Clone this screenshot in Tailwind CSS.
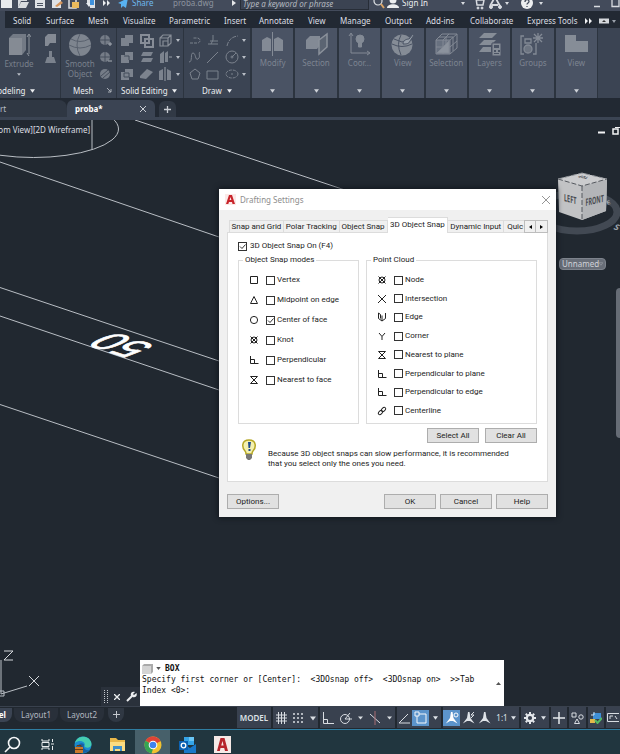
<!DOCTYPE html>
<html lang="en">
<head>
<meta charset="utf-8">
<meta name="viewport" content="width=device-width, initial-scale=1">
<title>proba.dwg</title>
<script src="https://cdn.jsdelivr.net/npm/@tailwindcss/browser@4"></script>
</head>
<body class="flex h-screen flex-col overflow-hidden bg-[#212830] font-['Noto_Sans',sans-serif] text-[8px] leading-[10px] text-[#d5d9df]">

<svg class="hidden">
  <defs>
    <symbol id="down" viewBox="0 0 6 4"><path d="M0 0h6L3 4z" fill="currentColor"/></symbol>
    <symbol id="knot" viewBox="0 0 10 10"><circle cx="5" cy="5" r="3"/><path d="M1.500 1.500l7 7M8.500 1.500l-7 7"/></symbol>
    <symbol id="perp" viewBox="0 0 10 10"><path d="M1.500 1v7.500H9.500M1.500 4.500h4v4"/></symbol>
    <symbol id="near" viewBox="0 0 10 10"><path d="M1.500 1.500h7l-7 7h7z"/></symbol>
    <symbol id="annot" viewBox="0 0 14 14"><path d="M6 1l1.500 0L8.500 7l4 5.500-4.500-2.500h-3L.8 12.500 5 7z" fill="currentColor"/></symbol>
  </defs>
</svg>

<header class="flex h-[11px] shrink-0 flex-col justify-end overflow-hidden bg-[#434b5b]">
  <div class="flex h-[16px] items-center">
    <div class="flex w-[118px] shrink-0 items-center">
      <svg class="h-[18px] w-[118px]" viewBox="0 0 118 18">
        <path d="M1 2h11v12H1z" fill="#e8eaec"/><path d="M18 4h9v3h-6l-3 7zM21 8h8l-3 6h-8z" fill="#d9dce0"/>
        <path d="M35 3h10v11H35z" fill="#dfe2e6"/><path d="M37 9h6v1h-6zM37 11h6v1h-6z" fill="#4b5362"/>
        <path d="M52 3h9v11h-9z" fill="#dfe2e6"/><path d="M55 12l6-5 2 2-6 4z" fill="#d5945a"/>
        <path d="M69 3h7v11h-7z" fill="none" stroke="#dfe2e6" stroke-width="1.500"/><path d="M72 8h7v6h-7z" fill="#e9b95c"/>
        <path d="M87 2h8v12h-5v-4h-3z" fill="#dfe2e6"/><path d="M86 9l3 4 3-4z" fill="#e9edf2"/><path d="M90 4h4v7h-4z" fill="#3f91dd"/>
        <path d="M103 6l3 3-3 3zM107 6l3 3-3 3z" fill="#eceef0"/>
      </svg>
    </div>
    <button class="flex w-[55px] shrink-0 items-center gap-1 text-[#6fb8ee]"><svg class="h-[12px] w-[10px]" viewBox="0 0 10 12"><path d="M0 6l10-5-2 10-3-2-2 2V7z" fill="#58b2f2"/></svg>Share</button>
    <span class="w-[59px] shrink-0 text-[#8c939f]">proba.dwg</span>
    <svg class="mr-1 h-2 w-1 shrink-0" viewBox="0 0 4 8"><path d="M0 1l4 3-4 3z" fill="#e6e8ea"/></svg>
    <input aria-label="Search" placeholder="Type a keyword or phrase" class="h-[14px] w-[129px] shrink-0 border border-[#272d37] bg-[#3b4352] px-[2px] italic placeholder:text-[#b2b7bf]">
    <svg class="ml-1 h-4 w-[12px] shrink-0" viewBox="0 0 12 16"><circle cx="5" cy="6" r="4" fill="none" stroke="#dfe2e5" stroke-width="1.200"/><path d="M8 9l3 4" stroke="#d9a364" stroke-width="2"/></svg>
    <button class="ml-[2px] flex w-[73px] shrink-0 items-center gap-[3px] text-[#eceef0]"><svg class="h-4 w-[12px]" viewBox="0 0 12 16"><circle cx="6" cy="5" r="3.500" fill="#eceef0"/><path d="M0 13c0-5 12-5 12 0z" fill="#eceef0"/></svg>Sign In</button>
    <svg class="h-[18px] w-[84px] shrink-0" viewBox="0 0 84 18" fill="none" stroke="#d8dbe0">
      <path d="M1 8h4l-2 3zM45 8h4l-2 3zM79 8h4l-2 3z" fill="#d8dbe0" stroke="none"/>
      <path d="M14 4h2l1 7h6l1-5h-8" stroke-width="1.500"/><circle cx="18" cy="14" r="1" fill="#d8dbe0"/><circle cx="22" cy="14" r="1" fill="#d8dbe0"/>
      <path d="M30 12l5-9 5 9M32 11h6" stroke-width="1.800"/><circle cx="31" cy="13" r="1.500" fill="#d8dbe0"/><circle cx="40" cy="13" r="1.500" fill="#d8dbe0"/>
      <circle cx="67" cy="9" r="6" fill="#eceef0" stroke="none"/><path d="M65 8c0-3 4-3 4-.5 0 1.500-2 1.500-2 3M67 12v1" stroke="#434b5b" stroke-width="1.300"/>
    </svg>
    <svg class="ml-auto h-[18px] w-[28px] shrink-0" viewBox="0 0 28 18" fill="none" stroke="#d8dbe0"><path d="M2 12.500h6M20 4v8.500h7V4" stroke-width="1.300"/></svg>
  </div>
</header>

<nav class="flex h-[17px] shrink-0 items-center bg-[#222933] pt-[2px] text-[#dcdfe3]">
  <span class="-mt-[2px] h-[17px] w-[5px] shrink-0 bg-[#3b4453]"></span>
  <a href="#" class="ml-2 w-[33px]">Solid</a><a href="#" class="w-[42px]">Surface</a><a href="#" class="w-[35px]">Mesh</a><a href="#" class="w-[46px]">Visualize</a><a href="#" class="w-[55px]">Parametric</a><a href="#" class="w-[35px]">Insert</a><a href="#" class="w-[49px]">Annotate</a><a href="#" class="w-[32px]">View</a><a href="#" class="w-[45px]">Manage</a><a href="#" class="w-[41px]">Output</a><a href="#" class="w-[44px]">Add-ins</a><a href="#" class="w-[57px]">Collaborate</a><a href="#" class="w-[58px] whitespace-nowrap">Express Tools</a>
  <svg class="h-2 w-[32px] shrink-0" viewBox="0 0 32 8"><path d="M0 1l3 3-3 3zM4 1l3 3-3 3z" fill="#f0f1f3"/><path d="M14 1.500h10v5H14z" fill="#d5d8dc"/><path d="M17 5h4l-2-2z" fill="#333"/><path d="M27 3h4l-2 3z" fill="#9aa1ab"/></svg>
</nav>

<section class="flex h-[70px] shrink-0 bg-[#3b4453] text-[#79808c]" aria-label="Ribbon">
  <div class="flex w-[61px] shrink-0 flex-col border-r border-[#2c343f]">
    <div class="flex flex-1">
      <button class="flex w-[38px] flex-col items-center pt-[5px]">
        <svg class="h-[24px] w-[24px]" viewBox="0 0 24 24"><path d="M2 5l4-4h13v16l-4 5H2z" fill="#737a85"/><path d="M2 5h13v17H2z" fill="#858b94"/><path d="M22 2v19M20 4l2-3 2 3M20 20l2 3" stroke="#8d939c" fill="none"/></svg>
        <span class="mt-[2px]">Extrude</span>
        <svg class="mt-1 h-[3px] w-1 text-[#b8bdc5]"><use href="#down"/></svg>
      </button>
      <svg class="ml-[6px] mt-[5px] h-[34px] w-[13px]" viewBox="0 0 13 34"><path d="M1 4l3-3h8v9H6l-2 3H1z" fill="#848a94"/><path d="M3 24h7l2 6H1zM5 18h3v6H5z" fill="#7b828d"/></svg>
    </div>
    <h2 class="flex h-[15px] items-center gap-1 whitespace-nowrap pl-[26px] text-[#eceef1]"><span class="-ml-[36px]">Modeling</span><svg class="h-[4px] w-[5px]"><use href="#down"/></svg></h2>
  </div>
  <div class="flex w-[56px] shrink-0 flex-col border-r border-[#2c343f]">
    <div class="flex flex-1">
      <button class="flex w-[38px] flex-col items-center pt-[5px]">
        <svg class="h-[24px] w-[24px]" viewBox="0 0 24 24"><circle cx="12" cy="12" r="11" fill="#7e858f"/><path d="M1 12q11 6 22 0M12 1q-6 11 0 22M3 6q9 5 18 0" stroke="#59616e" fill="none"/></svg>
        <span class="mt-[2px]">Smooth Object</span>
      </button>
      <svg class="mt-[5px] h-[47px] w-[13px]" viewBox="0 0 13 47"><g fill="#757c87"><circle cx="6" cy="7" r="5"/><circle cx="6" cy="24" r="5"/><circle cx="6" cy="41" r="5"/></g><path d="M1 7h10M6 2v10M1 24h10M6 19v10M2 43l7-6M4 45l7-6" stroke="#464e5c"/><path d="M9 11h4M11 9v4M9 28h4" stroke="#a9aeb6"/></svg>
    </div>
    <h2 class="flex h-[15px] items-center pl-[12px] text-[#eceef1]"><span class="flex-1">Mesh</span><svg class="mr-[4px] h-[5px] w-[5px]" viewBox="0 0 5 5"><path d="M0 0l4 4M4 1v3H1" stroke="#a9aeb6" fill="none"/></svg></h2>
  </div>
  <div class="flex w-[67px] shrink-0 flex-col border-r border-[#2c343f]">
    <svg class="mt-[5px] ml-[3px] h-[50px] w-[60px]" viewBox="0 0 60 50" fill="#7c838e">
      <path d="M1 5h4V2h8v8H9v3H1zM1 22h4v-3h8v8H9v3H1zM1 39h4v-3h8v8H9v3H1z"/><path d="M4 23h5v4M4 40h5v4H4z" stroke="#434c5a" fill="none"/>
      <path d="M21 2h8v8h-8zM25 6h8v8h-8z" fill="none" stroke="#878d97" stroke-width="2"/>
      <path d="M23 19h10l-2 4H21zM23 25h10l-2 4H21zM20 43l7-7 6 3-7 7-6-1z"/>
      <path d="M40 5l3-3h8v8l-3 3h-8zM40 5h8v8M48 5l3-3M43 8h5v5h-5z" fill="none" stroke="#878d97" stroke-width="1.200"/>
      <path d="M40 21l4-3v12h-4zM45 20l3-2v11h-3zM39 38l4-2v11h-4zM47 36l4 2v9h-4z"/><path d="M45 34v14M49 24h3" stroke="#9a9fa8"/>
      <path d="M56 6h4l-2 3zM56 23h4l-2 3zM56 40h4l-2 3z" fill="#b8bdc5"/>
    </svg>
    <h2 class="flex h-[15px] items-center gap-1 whitespace-nowrap pl-1 text-[#eceef1]">Solid Editing<svg class="h-[4px] w-[5px]"><use href="#down"/></svg></h2>
  </div>
  <div class="flex w-[67px] shrink-0 flex-col border-r border-[#2c343f]">
    <svg class="mt-[5px] ml-[4px] h-[50px] w-[60px]" viewBox="0 0 60 50" fill="none" stroke="#7b828d">
      <path d="M2 10h7c4 0 4-5 0-5H5" stroke-dasharray="3 1"/><path d="M20 11h10M22 8h8M25 2v5l-2 4"/><path d="M39 13q2-9 11-10" stroke-dasharray="4 1"/>
      <path d="M1 29c4 0 1-9 4-9s2 8 5 6 0-6 2-7M19 30l11-11"/><circle cx="44" cy="24" r="6"/><circle cx="44" cy="24" r="1"/><path d="M44 24l4-4"/>
      <path d="M7 36l5 4-2 6H4l-2-6zM19 38h11v8H19z"/><ellipse cx="44" cy="41" rx="6" ry="4" stroke-dasharray="3 1"/><path d="M43 41h2"/>
      <path d="M54 6h4l-2 3zM54 23h4l-2 3zM54 40h4l-2 3z" fill="#b8bdc5" stroke="none"/>
    </svg>
    <h2 class="flex h-[15px] items-center gap-[5px] pl-[18px] text-[#eceef1]">Draw<svg class="h-[4px] w-[5px]"><use href="#down"/></svg></h2>
  </div>
  <div class="grid w-[347px] shrink-0 grid-cols-8 gap-[2px] border-l border-[#2c343f] bg-[#2c343f] pr-px text-[#7d8491]">
    <button class="flex flex-col items-center bg-[#4a5364] pt-[4px] pb-[5px]"><svg class="h-[25px] w-[25px]" viewBox="0 0 25 25" fill="#838a95"><path d="M2 8l5-3 4 2v12H2zM23 8l-5-3-4 2v12h9z"/><path d="M12 0h1v24h-1z"/></svg><span class="mt-px">Modify</span><svg class="mt-auto h-[4px] w-[5px] text-[#cfd3d9]"><use href="#down"/></svg></button>
    <button class="flex flex-col items-center bg-[#4a5364] pt-[4px] pb-[5px]"><svg class="h-[25px] w-[25px]" viewBox="0 0 25 25"><path d="M2 8l4-4h10v9l-3 4H2z" fill="#838a95"/><path d="M15 8l8-6v13l-8 7z" fill="#5b6472" stroke="#8b919b" stroke-width="1.500"/></svg><span class="mt-px">Section</span><svg class="mt-auto h-[4px] w-[5px] text-[#cfd3d9]"><use href="#down"/></svg></button>
    <button class="flex flex-col items-center bg-[#4a5364] pt-[4px] pb-[5px]"><svg class="h-[25px] w-[25px]" viewBox="0 0 25 25" fill="none" stroke="#838a95"><path d="M4 2v19h18M2 4l2-3 2 3M20 19l3 2-3 2"/><circle cx="13" cy="7" r="4" fill="#838a95"/><path d="M11.500 11h3v4h-3z" fill="#838a95"/></svg><span class="mt-px">Coor...</span><svg class="mt-auto h-[4px] w-[5px] text-[#cfd3d9]"><use href="#down"/></svg></button>
    <button class="flex flex-col items-center bg-[#4a5364] pt-[4px] pb-[5px]"><svg class="h-[25px] w-[25px]" viewBox="0 0 25 25"><circle cx="12" cy="13" r="10.500" fill="#858c96"/><path d="M2 12q10 5 20 0M11 3q-5 9 0 20M4 7l8 3 8-3" fill="none" stroke="#4a5364"/><path d="M13 12c0-4 4-5 6-5l4-5 1 1-4 6c-1 3-4 3-7 3z" fill="#98a0aa" stroke="#4a5364"/></svg><span class="mt-px">View</span><svg class="mt-auto h-[4px] w-[5px] text-[#cfd3d9]"><use href="#down"/></svg></button>
    <button class="flex flex-col items-center bg-[#4a5364] pt-[4px] pb-[5px]"><svg class="h-[25px] w-[25px]" viewBox="0 0 25 25" stroke="#838a95"><path d="M2 8h14v14H2z" fill="#687180"/><path d="M2 8l6-6h15v14l-7 6M16 8l7-6M9 8v14M2 15h14l7-6M12 5v8M9 8l6-6M5 5h14v14" fill="none"/><path d="M3 21l12-12v12z" fill="#8b929d"/></svg><span class="mt-px">Selection</span><svg class="mt-auto h-[4px] w-[5px] text-[#cfd3d9]"><use href="#down"/></svg></button>
    <button class="flex flex-col items-center bg-[#4a5364] pt-[4px] pb-[5px]"><svg class="h-[25px] w-[25px]" viewBox="0 0 25 25" fill="#868d97"><path d="M7 1h13l-5 5H2zM7 8h12l-5 5H2zM6 15h8v5H2z"/><path d="M15 11h9v13h-9z" stroke="#4a5364"/><path d="M17 13h5v3h-5zM17 18h2v2h-2zM21 18h2v2h-2zM17 21h5v1h-5z" fill="#4a5364"/></svg><span class="mt-px">Layers</span><svg class="mt-auto h-[4px] w-[5px] text-[#cfd3d9]"><use href="#down"/></svg></button>
    <button class="flex flex-col items-center bg-[#4a5364] pt-[4px] pb-[5px]"><svg class="h-[25px] w-[25px]" viewBox="0 0 25 25" fill="none" stroke="#838a95" stroke-width="1.300"><path d="M4 4H1v18h3M13 22h3V11M5 7h6v4H5z"/><circle cx="8" cy="17" r="4" fill="#6d7582"/><path d="M18 1v10M13 6h10M14 2l8 8M22 2l-8 8"/></svg><span class="mt-px">Groups</span><svg class="mt-auto h-[4px] w-[5px] text-[#cfd3d9]"><use href="#down"/></svg></button>
    <button class="flex flex-col items-center bg-[#4a5364] pt-[4px] pb-[5px]"><svg class="h-[25px] w-[25px]" viewBox="0 0 25 25"><path d="M1 3h11v6h12v11H1z" fill="#868d97"/></svg><span class="mt-px">View</span><svg class="mt-auto h-[4px] w-[5px] text-[#cfd3d9]"><use href="#down"/></svg></button>
  </div>
</section>

<div class="flex h-[22px] shrink-0 items-end border-b-3 border-[#3b4453] bg-[#222933]">
  <div class="flex h-[17px] w-[67px] shrink-0 items-center rounded-tr-lg bg-[#2f3743] text-[#b9bec6]">rt</div>
  <div class="flex h-[17px] w-[88px] shrink-0 items-center justify-between rounded-t-md bg-[#3b4453] pl-2 pr-[9px] font-bold text-white">proba*
    <button aria-label="Close tab"><svg class="h-[6px] w-[6px]" viewBox="0 0 6 6"><path d="M0 0l6 6M6 0L0 6" stroke="#c9cdd3"/></svg></button>
  </div>
  <button aria-label="New tab" class="ml-1 flex h-[16px] w-[17px] items-center justify-center rounded-t-md bg-[#313945]"><svg class="h-[7px] w-[7px]" viewBox="0 0 7 7"><path d="M3.500 0v7M0 3.500h7" stroke="#c9cdd3" stroke-width="1.300"/></svg></button>
</div>

<main class="relative min-h-0 flex-1 overflow-hidden bg-[#212830]">
  <svg class="absolute left-0 top-0 h-[586px] w-[620px]" viewBox="0 0 620 586" fill="none" stroke="#b9bec4">
    <path d="M135 0L345 70M0 42L219 117M0 167.500L219 241M0 196L219 270M0 284.500L219 358M92 0V29.500"/>
    <ellipse cx="33.500" cy="9" rx="85" ry="28.500"/>
    <text transform="matrix(-1.280 -.42 1.400 -.6 156.500 226)" font-family="Liberation Sans" font-size="30" fill="#fff" stroke="#fff" stroke-width=".7">50</text>
    <path d="M1 540v34L27 566M-4 571h8v5h-8z"/><path d="M29 556l10 10M39 556l-10 10M4 531h9l-9 9h9" stroke="#d5d8dc"/>
  </svg>
  <span class="absolute left-[-21px] top-[5px] whitespace-nowrap text-[#dcdfe2]">[Custom View][2D Wireframe]</span>
  <div class="absolute right-0 top-0 h-[160px] w-[80px]">
    <svg class="h-full w-full" viewBox="540 120 80 160" fill="none">
      <path d="M598 132.500h7" stroke="#f2f3f4" stroke-width="2"/><path d="M613 129h5v5h-5z" stroke="#f2f3f4" stroke-width="1.500"/><path d="M615 127.500h5" stroke="#f2f3f4"/>
      <ellipse cx="577" cy="212" rx="40" ry="19" stroke="#424953" stroke-width="7"/>
      <path d="M558 179l24-6 25 6-1 32-24 9-23-8z" fill="#c2c3c5"/><path d="M582 186l25-7-1 32-24 9z" fill="#b3b5b8"/><path d="M558 179l24-6 25 6-25 7z" fill="#cbccce"/>
      <path d="M558 179l24 7 25-7M582 186v34" stroke="#55595f" stroke-dasharray="5 2"/><path d="M558 179l24-6 25 6" stroke="#8b8f94" stroke-dasharray="5 2"/>
      <g font-family="Noto Sans, sans-serif" font-size="9" font-weight="700" fill="#4a4d52">
        <text transform="matrix(.62 .17 0 1.100 564 201)">LEFT</text><text transform="matrix(.6 -.14 0 1.100 585.500 206)">FRONT</text><text transform="matrix(-.5 -.1 .4 -.3 589 177)">TOP</text>
        <text transform="matrix(.9 .3 -.5 .8 613 229)" fill="#9ea3aa">S</text><text transform="matrix(.8 -.2 .2 .6 607 205)" fill="#9ea3aa">E</text>
      </g>
    </svg>
  </div>
  <button class="absolute right-[14px] top-[138px] flex h-[12px] w-[47px] items-center justify-between rounded border border-[#7d838c] bg-[#686e78] px-[2px] text-[#d0d3d8]">Unnamed<svg class="h-[4px] w-[5px]" viewBox="0 0 6 4"><path d="M0 0h6L3 4z" fill="none" stroke="#989da5"/></svg></button>
  <div class="absolute right-0 top-[168px] h-[150px] w-1 rounded-l bg-[#666c75]"></div>

  <section role="dialog" aria-labelledby="dlg" class="absolute left-[219px] top-[69px] w-[337px] bg-[#f0f0f0] pb-2 font-['Roboto','Liberation_Sans',sans-serif] text-[#1c1c1c] shadow-[0_0_5px_1px_#11161c]">
    <header class="flex h-[21px] items-center bg-white px-[6px] font-['Noto_Sans',sans-serif] text-[#8d8d8d]">
      <svg class="mr-[4px] h-[11px] w-[11px]" viewBox="0 0 11 11"><path d="M0 0h11v11H0z" fill="#fbe9e8"/><path d="M1 10L4 1h3l3 9H7.500L7 8H4l-.7 2zM4.600 6h1.800L5.500 3z" fill="#c8242b"/></svg>
      <h1 id="dlg" class="flex-1">Drafting Settings</h1>
      <button aria-label="Close"><svg class="h-2 w-2" viewBox="0 0 8 8"><path d="M0 0l8 8M8 0L0 8" stroke="#8a8a8a" stroke-width=".9"/></svg></button>
    </header>
    <div class="mt-[7px] px-2">
      <div role="tablist" class="relative z-10 -mb-px flex h-[16px] items-end pl-[2px] whitespace-nowrap">
        <button role="tab" class="h-[13px] w-[55px] border border-b-0 border-[#dcdcdc]">Snap and Grid</button>
        <button role="tab" class="h-[13px] w-[56px] border border-b-0 border-l-0 border-[#dcdcdc]">Polar Tracking</button>
        <button role="tab" class="h-[13px] w-[48px] border border-b-0 border-l-0 border-[#dcdcdc]">Object Snap</button>
        <button role="tab" aria-selected="true" class="flex h-[16px] w-[61px] justify-center border border-b-0 border-l-0 border-[#dcdcdc] bg-white pt-[2px]">3D Object Snap</button>
        <button role="tab" class="h-[13px] w-[56px] border border-b-0 border-l-0 border-[#dcdcdc]">Dynamic Input</button>
        <button role="tab" class="h-[13px] w-[20px] border-t border-[#dcdcdc] pl-[3px] text-left">Quic</button>
        <button aria-label="Previous tabs" class="flex h-[13px] w-[12px] items-center justify-center border border-[#bdbdbd]"><svg class="h-1 w-[3px]" viewBox="0 0 3 4"><path d="M3 0v4L0 2z"/></svg></button>
        <button aria-label="Next tabs" class="flex h-[13px] w-[12px] items-center justify-center border border-l-0 border-[#bdbdbd]"><svg class="h-1 w-[3px]" viewBox="0 0 3 4"><path d="M0 0v4l3-2z"/></svg></button>
      </div>
      <div class="border border-[#dcdcdc] bg-white px-[10px] pt-2 pb-3">
        <label class="flex h-[10px] items-center gap-[3px]"><input type="checkbox" checked class="absolute h-[9px] w-[9px] appearance-none border border-[#333]"><svg class="h-[9px] w-[9px]" viewBox="0 0 9 9"><path d="M2 4.500l2 2L7.500 2.500" fill="none" stroke="#333"/></svg>3D Object Snap On (F4)</label>
        <div class="mt-1 flex gap-[7px]">
          <fieldset class="flex h-[169px] w-[121px] flex-col border border-[#dcdcdc] pl-[10px]">
            <legend class="-ml-[6px] px-[2px]">Object Snap modes</legend>
            <div class="mt-[10px] flex h-[110px] flex-col justify-between">
              <label class="flex h-[10px] items-center"><svg class="mr-[7px] h-[10px] w-[10px]" fill="none" stroke="#222" viewBox="0 0 10 10"><path d="M1.500 1.500h7v7h-7z"/></svg><input type="checkbox" class="mr-[2px] h-[9px] w-[9px] appearance-none border border-[#333]">Vertex</label>
              <label class="flex h-[10px] items-center"><svg class="mr-[7px] h-[10px] w-[10px]" fill="none" stroke="#222" viewBox="0 0 10 10"><path d="M5 1.500l3.500 7h-7z"/></svg><input type="checkbox" class="mr-[2px] h-[9px] w-[9px] appearance-none border border-[#333]">Midpoint on edge</label>
              <label class="relative flex h-[10px] items-center"><svg class="mr-[7px] h-[10px] w-[10px]" fill="none" stroke="#222" viewBox="0 0 10 10"><circle cx="5" cy="5" r="3.600"/></svg><input type="checkbox" checked class="absolute left-[17px] h-[9px] w-[9px] appearance-none border border-[#333]"><svg class="mr-[2px] h-[9px] w-[9px]" viewBox="0 0 9 9"><path d="M2 4.500l2 2L7.500 2.500" fill="none" stroke="#333"/></svg>Center of face</label>
              <label class="flex h-[10px] items-center"><svg class="mr-[7px] h-[10px] w-[10px]" fill="none" stroke="#222"><use href="#knot"/></svg><input type="checkbox" class="mr-[2px] h-[9px] w-[9px] appearance-none border border-[#333]">Knot</label>
              <label class="flex h-[10px] items-center"><svg class="mr-[7px] h-[10px] w-[10px]" fill="none" stroke="#222"><use href="#perp"/></svg><input type="checkbox" class="mr-[2px] h-[9px] w-[9px] appearance-none border border-[#333]">Perpendicular</label>
              <label class="flex h-[10px] items-center"><svg class="mr-[7px] h-[10px] w-[10px]" fill="none" stroke="#222"><use href="#near"/></svg><input type="checkbox" class="mr-[2px] h-[9px] w-[9px] appearance-none border border-[#333]">Nearest to face</label>
            </div>
          </fieldset>
          <fieldset class="flex h-[169px] flex-1 flex-col border border-[#dcdcdc] pl-[10px]">
            <legend class="-ml-[6px] px-[2px]">Point Cloud</legend>
            <div class="mt-[10px] flex h-[141px] flex-col justify-between">
              <label class="flex h-[10px] items-center"><svg class="mr-[7px] h-[10px] w-[10px]" fill="none" stroke="#222"><use href="#knot"/></svg><input type="checkbox" class="mr-[2px] h-[9px] w-[9px] appearance-none border border-[#333]">Node</label>
              <label class="flex h-[10px] items-center"><svg class="mr-[7px] h-[10px] w-[10px]" fill="none" stroke="#222" viewBox="0 0 10 10"><path d="M1 1l8 8M9 1L1 9"/></svg><input type="checkbox" class="mr-[2px] h-[9px] w-[9px] appearance-none border border-[#333]">Intersection</label>
              <label class="flex h-[10px] items-center"><svg class="mr-[7px] h-[10px] w-[10px]" fill="none" stroke="#222" viewBox="0 0 10 10"><path d="M1.500 1v5.500L5 9l3.500-2.500V1M5 3.500V9M1.500 1l2 1.500v4"/></svg><input type="checkbox" class="mr-[2px] h-[9px] w-[9px] appearance-none border border-[#333]">Edge</label>
              <label class="flex h-[10px] items-center"><svg class="mr-[7px] h-[10px] w-[10px]" fill="none" stroke="#222" viewBox="0 0 10 10"><path d="M2 2l3 3.500V9M8 2L5 5.500"/></svg><input type="checkbox" class="mr-[2px] h-[9px] w-[9px] appearance-none border border-[#333]">Corner</label>
              <label class="flex h-[10px] items-center"><svg class="mr-[7px] h-[10px] w-[10px]" fill="none" stroke="#222"><use href="#near"/></svg><input type="checkbox" class="mr-[2px] h-[9px] w-[9px] appearance-none border border-[#333]">Nearest to plane</label>
              <label class="flex h-[10px] items-center"><svg class="mr-[7px] h-[10px] w-[10px]" fill="none" stroke="#222"><use href="#perp"/></svg><input type="checkbox" class="mr-[2px] h-[9px] w-[9px] appearance-none border border-[#333]">Perpendicular to plane</label>
              <label class="flex h-[10px] items-center"><svg class="mr-[7px] h-[10px] w-[10px]" fill="none" stroke="#222"><use href="#perp"/></svg><input type="checkbox" class="mr-[2px] h-[9px] w-[9px] appearance-none border border-[#333]">Perpendicular to edge</label>
              <label class="flex h-[10px] items-center"><svg class="mr-[7px] h-[10px] w-[10px]" fill="none" stroke="#222" viewBox="0 0 10 10"><ellipse cx="3.500" cy="6.500" rx="2.500" ry="1.600" transform="rotate(-45 3.500 6.500)"/><ellipse cx="6.500" cy="3.500" rx="2.500" ry="1.600" transform="rotate(-45 6.500 3.500)"/></svg><input type="checkbox" class="mr-[2px] h-[9px] w-[9px] appearance-none border border-[#333]">Centerline</label>
            </div>
          </fieldset>
        </div>
        <div class="mt-[4px] flex justify-end gap-[6px]">
          <button class="h-[15px] w-[52px] border border-[#adadad] bg-[#e1e1e1]">Select All</button>
          <button class="h-[15px] w-[52px] border border-[#adadad] bg-[#e1e1e1]">Clear All</button>
        </div>
        <div class="-mt-[10px] flex items-end pl-[4px]">
          <svg class="mr-[12px] mb-[8px] h-[22px] w-[14px]" viewBox="0 0 14 22"><path d="M7 1c8 0 7 8 4 11-1 1-1 2-1 3H4c0-1 0-2-1-3C0 9-1 1 7 1z" fill="#f4f1b0" stroke="#b5a726" stroke-width="1.500"/><path d="M6 3h3l-1 6H6.500zM6.500 10h2v2h-2z" fill="#1e4a8c"/><path d="M4 15h6v4l-2 2H6l-2-2z" fill="#777"/></svg>
          <p class="pt-4">Because 3D object snaps can slow performance, it is recommended<br>that you select only the ones you need.</p>
        </div>
      </div>
      <div class="mt-[12px] flex gap-[4px]">
        <button class="mr-auto h-[15px] w-[52px] border border-[#adadad] bg-[#e1e1e1]">Options...</button>
        <button class="h-[15px] w-[52px] border border-[#adadad] bg-[#e1e1e1]">OK</button>
        <button class="h-[15px] w-[52px] border border-[#adadad] bg-[#e1e1e1]">Cancel</button>
        <button class="h-[15px] w-[52px] border border-[#adadad] bg-[#e1e1e1]">Help</button>
      </div>
    </div>
  </section>

  <div class="absolute bottom-0 left-[101px] flex items-end">
    <div class="flex h-[19px] w-[39px] items-center justify-between bg-[#2a313b] px-[3px]">
      <svg class="h-[13px] w-[4px]" viewBox="0 0 4 13"><path d="M.5 0v13M3.500 0v13" stroke="#c4c8cd" stroke-dasharray="1 1"/></svg>
      <svg class="h-[6px] w-[6px]" viewBox="0 0 6 6"><path d="M0 0l6 6M6 0L0 6" stroke="#eceef0" stroke-width="1.300"/></svg>
      <svg class="h-[11px] w-[11px]" viewBox="0 0 11 11"><path d="M1 10l5-5" stroke="#eceef0" stroke-width="2"/><path d="M5 5c-1-3 1-5 4-4L7 3l1 1 2.500-2c1 3-1 5-4 4z" fill="#eceef0"/></svg>
    </div>
    <div class="flex h-[46px] w-[364px] items-center bg-white pb-[7px] pl-[2px] font-['DejaVu_Sans_Mono',monospace] leading-[11px] text-[#111]">
      <div class="flex-1">
        <div class="flex items-center"><svg class="mr-[3px] h-[10px] w-[11px]" viewBox="0 0 11 10"><path d="M0 2l2-2h9v8l-2 2H0z" fill="#aaa"/><path d="M0 2h9v8H0z" fill="#d4d4d4"/></svg><svg class="mr-[4px] h-[3px] w-[5px] text-[#555]"><use href="#down"/></svg><b>BOX</b></div>
        <pre class="font-['DejaVu_Sans_Mono',monospace]">Specify first corner or [Center]:  &lt;3DOsnap off&gt;  &lt;3DOsnap on&gt;  &gt;&gt;Tab
Index &lt;0&gt;:</pre>
      </div>
      <svg class="mt-[7px] mr-[3px] h-[3px] w-[5px]" viewBox="0 0 5 3"><path d="M0 3h5L2.500 0z" fill="#555"/></svg>
    </div>
  </div>
</main>

<footer class="flex h-[23px] shrink-0 items-start border-t border-[#39414d] bg-[#212830]">
  <div class="flex h-[15px] flex-1 items-center text-[#b3b8c0]">
    <button class="flex h-[14px] w-[12px] items-center justify-end rounded-br-lg bg-[#3b4453] pr-[6px] font-bold text-white">Model</button>
    <button class="ml-[2px] h-[14px] w-[44px] rounded-b-lg bg-[#29303a]">Layout1</button>
    <button class="ml-[2px] h-[14px] w-[44px] rounded-b-lg bg-[#29303a]">Layout2</button>
    <button aria-label="New layout" class="ml-1 flex h-[14px] w-[16px] items-center justify-center rounded-b-lg bg-[#303843]"><svg class="h-[7px] w-[7px]" viewBox="0 0 7 7"><path d="M3.500 0v7M0 3.500h7" stroke="#c4c8ce"/></svg></button>
  </div>
  <div class="flex h-[21px] w-[383px] shrink-0 gap-[2px] text-[#dfe3e8] [&>*]:bg-[#39414f] [&>*]:flex [&>*]:items-center">
    <button class="w-[34px] justify-center font-semibold">MODEL</button>
    <div class="w-[45px]">
      <svg class="h-[12px] w-[45px]" viewBox="0 0 45 12" stroke="#d9dde2" fill="none"><path d="M5.500 0v12M8.500 0v12M11.500 0v12M3 3h11M3 6h11M3 9h11"/><path d="M20 2h11M20 6h11M20 10h11" stroke-width="1.500" stroke-dasharray="2 2"/><path d="M37 4.500h6l-3 4z" fill="#d9dde2" stroke="none"/></svg>
    </div>
    <div class="w-[75px]">
      <svg class="h-[14px] w-[75px]" viewBox="0 0 75 14" stroke="#d9dde2" fill="none"><path d="M3.500 1v11.500H14M3.500 8.500h4v4"/><circle cx="25" cy="8" r="4.500"/><path d="M25 8h7M25 8l5-6"/><path d="M38 5.500h5l-2.500 3zM67 5.500h5l-2.500 3z" fill="#d9dde2" stroke="none"/><path d="M50 3l10 9"/><path d="M55 0v14" stroke="#a96f75"/></svg>
    </div>
    <div class="w-[44px]">
      <svg class="h-[12px] w-[15px]" viewBox="0 0 15 12" stroke="#d9dde2" fill="none"><path d="M13 11H2L11 2"/></svg>
      <button aria-label="Object snap" aria-pressed="true" class="flex h-[16px] w-[17px] items-center justify-center bg-[#5c94cb]"><svg class="h-[13px] w-[13px]" viewBox="0 0 13 13" fill="none" stroke="#f4f7fa"><path d="M5 3h7v9H3V5M1 1h4v4H1z"/></svg></button>
      <svg class="mx-auto h-[4px] w-[5px]"><use href="#down"/></svg>
    </div>
    <div class="w-[76px]">
      <button aria-label="Annotation visibility" aria-pressed="true" class="flex h-[16px] w-[17px] items-center justify-center bg-[#5c94cb] text-white"><svg class="h-[14px] w-[14px]" viewBox="0 0 14 14"><use href="#annot"/><circle cx="11" cy="4" r="2" fill="none" stroke="#fff"/></svg></button>
      <button aria-label="Auto scale" class="flex w-[17px] justify-center"><svg class="h-[14px] w-[14px]" viewBox="0 0 14 14"><use href="#annot"/><path d="M12 1l-3 3h3l-3 3" stroke="#dfe3e8" fill="none"/></svg></button>
      <button aria-label="Annotation scale" class="flex w-[16px] justify-center"><svg class="h-[14px] w-[14px]"><use href="#annot"/></svg></button>
      <button class="flex w-[26px] items-center justify-center gap-[3px]">1:1<svg class="h-[4px] w-[5px]"><use href="#down"/></svg></button>
    </div>
    <div class="w-[28px] justify-around">
      <svg class="h-[12px] w-[12px]" viewBox="0 0 12 12" fill="none" stroke="#e4e7eb"><circle cx="6" cy="6" r="3.200" stroke-width="2.200"/><path d="M6 0v2M6 10v2M0 6h2M10 6h2M1.800 1.800l1.400 1.400M8.800 8.800l1.400 1.400M10.200 1.800L8.800 3.200M3.200 8.800l-1.400 1.400" stroke-width="2"/></svg>
      <svg class="h-[4px] w-[5px]"><use href="#down"/></svg>
    </div>
    <button aria-label="Add" class="w-[16px] justify-center"><svg class="h-[12px] w-[12px]" viewBox="0 0 12 12"><path d="M6 0v12M0 6h12" stroke="#e4e7eb" stroke-width="1.500"/></svg></button>
    <button aria-label="Isolate" class="w-[17px] justify-center"><svg class="h-[12px] w-[13px]" viewBox="0 0 13 12" fill="none" stroke="#d9dde2"><path d="M1 1h4v4H1zM6 7l2.500 4.500h-5z"/><circle cx="10" cy="5" r="2.200"/></svg></button>
    <button aria-label="Hardware" class="w-[16px] justify-center"><svg class="h-[12px] w-[12px]" viewBox="0 0 12 12"><path d="M3 1h8v6H3z" fill="#3f8fd6"/><path d="M1 3h3M4 0v3" stroke="#cfe1f2"/><path d="M0 7h5v4H0z" fill="#e3b949"/><path d="M5 8l2.500 3L12 6" stroke="#54b964" stroke-width="2" fill="none"/></svg></button>
    <button aria-label="Clean screen" class="w-[14px] shrink-0 justify-center"><svg class="h-[9px] w-[12px]" viewBox="0 0 12 9" fill="none" stroke="#d9dde2"><path d="M.5.5h13v8H.5zM3 6V3h3M8 3l2 3"/></svg></button>
  </div>
</footer>

<div class="flex h-[25px] shrink-0 items-center overflow-hidden border-t border-[#2f7da1] bg-[#21363f] [&>button]:flex [&>button]:w-[35px] [&>button]:shrink-0 [&>button]:justify-center [&>button]:pt-[6px] [&>button]:h-full">
  <button aria-label="Search" class="-ml-[5px]"><svg class="h-[17px] w-[17px]" viewBox="0 0 17 17" fill="none" stroke="#f4f6f7" stroke-width="1.600"><circle cx="10" cy="7" r="5.500"/><path d="M6 11l-5 5"/></svg></button>
  <button aria-label="Task view"><svg class="h-[17px] w-[14px]" viewBox="0 0 14 17" fill="none" stroke="#e8ecee"><path d="M1 3v2h7V3M1 6.500h7v4H1zM1 14v-2h7v2M11.500 3v3M11.500 10v4M10 8h3"/></svg></button>
  <button aria-label="Edge"><svg class="h-[18px] w-[18px]" viewBox="0 0 18 18"><circle cx="9" cy="9" r="8.500" fill="#1b8bd0"/><path d="M1 7C3-2 17-1 17.500 8c0 5-7 4-7 2 2-4-5-7-9.500-3z" fill="#45cdb0"/><path d="M4 10c1-4 6-3 6-1-1 3 1 6 6 5-5 5-12 3-12-4z" fill="#1761a4"/><path d="M1 11h8v6H1z" fill="#c97a2b"/><path d="M3 11V9.500h4V11M1 13.500h8" stroke="#6d3c12" fill="none"/></svg></button>
  <button aria-label="Files"><svg class="h-[17px] w-[17px]" viewBox="0 0 17 17"><path d="M1 2h6l2 2h7v11H1z" fill="#e9b84a"/><path d="M1 6h15v9H1z" fill="#fbdc81"/><path d="M4 10h9v5h-2v-2H6v2H4z" fill="#3f8fc9"/></svg></button>
  <button aria-label="Chrome" class="bg-[#47606a]"><svg class="h-[18px] w-[18px]" viewBox="0 0 18 18"><circle cx="9" cy="9" r="8.500" fill="#f2c230"/><path d="M9 9L1.600 4.800A8.500 8.500 0 0 1 16.400 5z" fill="#df4437"/><path d="M1.600 4.800L9 9v4l-1.500 4.400A8.500 8.500 0 0 1 1.600 4.800z" fill="#35a453"/><path d="M9 5h7.400L9 9z" fill="#df4437"/><circle cx="9" cy="9" r="4.300" fill="#fff"/><circle cx="9" cy="9" r="3.300" fill="#3f82ee"/></svg></button>
  <button aria-label="Outlook"><svg class="h-[17px] w-[17px]" viewBox="0 0 17 17"><path d="M5 1h10v8H5z" fill="#35a5e8"/><path d="M5 8l6 4 6-4v9H5z" fill="#1a78c8"/><path d="M10 1h5v4h-5z" fill="#69c6f5"/><path d="M0 5h9v9H0z" fill="#0c62b3"/><circle cx="4.500" cy="9.500" r="2.300" fill="none" stroke="#fff" stroke-width="1.300"/></svg></button>
  <button aria-label="AutoCAD"><svg class="h-[17px] w-[17px]" viewBox="0 0 17 17"><path d="M0 0h17v17H0z" fill="#f6e9e6"/><path d="M3 15L6.500 2h4L14 15h-3l-.8-3H6.500l-.7 3zM7.200 9.500h2.400L8.500 5z" fill="#b6242b"/></svg></button>
</div>
</body>
</html>
